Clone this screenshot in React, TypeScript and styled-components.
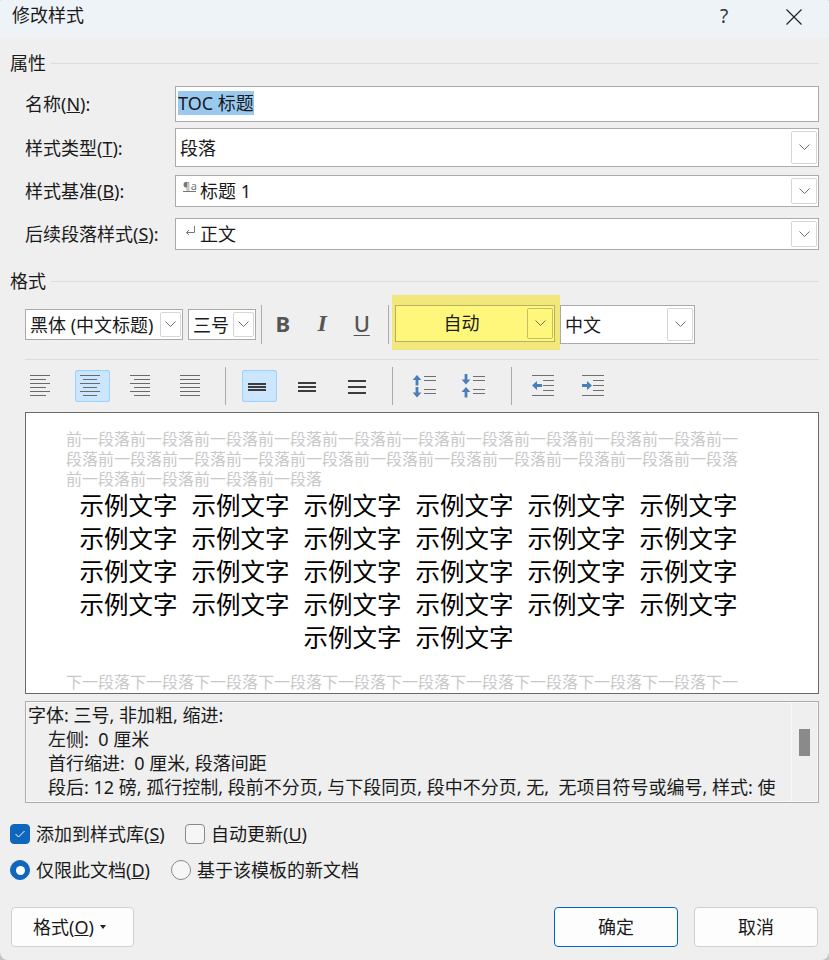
import React from "react";
import styled, { createGlobalStyle } from "styled-components";

const GlobalStyle = createGlobalStyle`
  html, body {
    margin: 0;
    padding: 0;
    background: #c4c4c4;
  }
  * {
    box-sizing: border-box;
  }
`;

const Dialog = styled.div`
  width: 829px;
  height: 960px;
  display: flex;
  flex-direction: column;
  overflow: hidden;
  background: #efefef;
  border-radius: 2px 2px 8px 8px;
  color: #1a1a1a;
  font-family: "Noto Sans", "Noto Sans CJK SC", sans-serif;
  font-size: 18px;
  line-height: 24px;
`;

const TitleBar = styled.div`
  height: 38px;
  flex: none;
  display: flex;
  align-items: center;
  padding: 0 0 5px 12px;
  background: #eef3f8;
  font-size: 18px;
`;

const TitleText = styled.span`
  flex: 1;
  margin-top: -3px;
`;

const HelpButton = styled.span`
  width: 20px;
  margin: -2px 52px 0 0;
  text-align: center;
  font-size: 19px;
  color: #333;
`;

const CloseButton = styled.svg`
  width: 16px;
  height: 16px;
  margin-right: 27px;
`;

const Body = styled.div`
  flex: 1;
  display: flex;
  flex-direction: column;
  padding: 0 10px;
`;

const GroupHead = styled.div<{ $top: number }>`
  display: flex;
  align-items: center;
  height: 24px;
  margin-top: ${({ $top }) => $top}px;
  font-size: 18px;
`;

const GroupLine = styled.div`
  flex: 1;
  height: 1px;
  margin: 0 0 0 5px;
  background: #dcdcdc;
`;

const FormRow = styled.div<{ $top: number; $h: number }>`
  display: flex;
  align-items: center;
  height: ${({ $h }) => $h}px;
  margin-top: ${({ $top }) => $top}px;
  padding-left: 15px;
`;

const FieldLabel = styled.label`
  width: 150px;
  flex: none;
`;

const Field = styled.div`
  flex: 1;
  height: 100%;
  display: flex;
  align-items: center;
  padding: 0 1px 0 4px;
  background: #fff;
  border: 1px solid #aaaab0;
`;

const FieldText = styled.span`
  flex: 1;
  display: flex;
  align-items: center;
  white-space: nowrap;
`;

const Selected = styled.span`
  margin: -3px 0 0 -2px;
  background: #99c9ef;
`;

const StyleMark = styled.span`
  width: 13px;
  margin: -10px 4px 0 3px;
  border-bottom: 1px solid #777;
  color: #777;
  font-size: 11px;
  line-height: 10px;
  letter-spacing: 0.5px;
`;

const ReturnMark = styled.svg`
  width: 12px;
  height: 12px;
  margin: -6px 5px 0 3px;
`;

const ChevronBox = styled.div<{ $w?: number; $bg?: string; $line?: string }>`
  flex: none;
  width: ${({ $w }) => $w ?? 26}px;
  height: calc(100% - 4px);
  display: flex;
  align-items: center;
  justify-content: center;
  background: ${({ $bg }) => $bg ?? "#fff"};
  border: 1px solid ${({ $line }) => $line ?? "#d6d6d6"};
  border-radius: 2px;
`;

const ChevronIcon = styled.svg`
  width: 11px;
  height: 7px;
`;

const Toolbar = styled.div`
  display: flex;
  align-items: center;
  height: 39px;
  margin-top: 12px;
  padding-left: 15px;
`;

const Combo = styled.div<{ $w: number; $h: number; $left?: number }>`
  flex: none;
  display: flex;
  align-items: center;
  width: ${({ $w }) => $w}px;
  height: ${({ $h }) => $h}px;
  margin-left: ${({ $left }) => $left ?? 0}px;
  padding: 0 1px 0 4px;
  background: #fff;
  border: 1px solid #aaaaaa;
  white-space: nowrap;
`;

const ComboText = styled.span`
  flex: 1;
  overflow: hidden;
`;

const ToolSep = styled.div<{ $left: number; $right: number; $h?: number }>`
  flex: none;
  width: 1px;
  height: ${({ $h }) => $h ?? 39}px;
  margin: 0 ${({ $right }) => $right}px 0 ${({ $left }) => $left}px;
  background: #ababab;
`;

const FontButton = styled.span<{ $italic?: boolean; $under?: boolean }>`
  flex: none;
  width: 39.5px;
  padding-bottom: 4px;
  text-align: center;
  color: #555;
  font-family: ${({ $italic }) => ($italic ? '"Liberation Serif"' : '"Noto Sans"')}, serif;
  font-size: ${({ $italic }) => ($italic ? 24 : 22)}px;
  font-weight: ${({ $under }) => ($under ? 500 : "bold")};
  font-style: ${({ $italic }) => ($italic ? "italic" : "normal")};
  text-decoration: ${({ $under }) => ($under ? "underline" : "none")};
  text-decoration-thickness: 1px;
  text-underline-offset: 3px;
`;

const Highlight = styled.div`
  flex: none;
  display: flex;
  align-items: center;
  width: 168px;
  height: 55px;
  margin: -10px 0 -6px;
  padding-left: 3px;
  background: #f2e77b;
`;

const ColorCombo = styled.div`
  display: flex;
  align-items: center;
  width: 160px;
  height: 37px;
  margin-top: 1px;
  padding: 0 1px 0 0;
  background: #fff67c;
  border: 1px solid #b6b163;
`;

const ColorText = styled.span`
  flex: 1;
  text-align: center;
`;

const Divider = styled.div`
  height: 1px;
  margin: 15px 0 0 15px;
  background: #dcdcdc;
`;

const IconBar = styled.div`
  display: flex;
  align-items: center;
  height: 38px;
  margin-top: 7px;
  padding-left: 15px;
`;

const IconGroup = styled.div<{ $gap: number }>`
  display: flex;
  gap: ${({ $gap }) => $gap}px;
`;

const IconButton = styled.div<{ $on?: boolean; $pad?: number }>`
  width: 35px;
  height: 32px;
  display: flex;
  align-items: center;
  padding-left: ${({ $pad }) => $pad ?? 5}px;
  background: ${({ $on }) => ($on ? "#cce6ff" : "transparent")};
  border-radius: 3px;
  box-shadow: ${({ $on }) => ($on ? "inset 0 0 0 1px #99d1ff" : "none")};
`;

const Preview = styled.div`
  height: 282px;
  margin: 7px 0 0 15px;
  padding: 16px 80px 0 40px;
  overflow: hidden;
  background: #fff;
  border: 1px solid #6a6a6a;
`;

const GhostLine = styled.div<{ $top?: number }>`
  margin-top: ${({ $top }) => $top ?? 0}px;
  color: #c8c8c8;
  font-size: 16px;
  line-height: 20px;
  white-space: nowrap;
`;

const SampleRow = styled.div`
  display: flex;
  justify-content: center;
  gap: 14px;
  height: 33px;
  padding-left: 13px;
  color: #000;
  font-size: 24.5px;
  line-height: 34px;
  white-space: nowrap;
`;

const Description = styled.div`
  display: flex;
  height: 102px;
  margin: 7px 0 0 15px;
  border: 1px solid #aaaab0;
  box-shadow: inset 0 0 0 1px #f8f8f8;
`;

const DescText = styled.div`
  flex: 1;
  padding: 1px 0 0 2px;
  overflow: hidden;
  white-space: nowrap;
`;

const DescLine = styled.div<{ $indent?: boolean }>`
  padding-left: ${({ $indent }) => ($indent ? 20 : 0)}px;
  white-space: pre;
`;

const DescScroll = styled.div`
  flex: none;
  width: 27px;
  padding: 27px 0 0 7px;
  border-left: 1px solid #fafafa;
`;

const ScrollThumb = styled.div`
  width: 11px;
  height: 27px;
  background: #8a8a8a;
`;

const OptionRow = styled.div<{ $top: number }>`
  display: flex;
  align-items: center;
  height: 20px;
  margin-top: ${({ $top }) => $top}px;
`;

const OptionLabel = styled.label<{ $w: number }>`
  width: ${({ $w }) => $w}px;
  margin-left: 6px;
  white-space: nowrap;
`;

const CheckMark = styled.span<{ $on?: boolean }>`
  flex: none;
  width: 20px;
  height: 20px;
  display: flex;
  align-items: center;
  justify-content: center;
  background: ${({ $on }) => ($on ? "#0f67bd" : "#f6f6f6")};
  border: 1px solid ${({ $on }) => ($on ? "#0f67bd" : "#8a8a8a")};
  border-radius: 4px;
`;

const RadioMark = styled.span<{ $on?: boolean }>`
  flex: none;
  width: 20px;
  height: 20px;
  display: flex;
  align-items: center;
  justify-content: center;
  background: ${({ $on }) => ($on ? "#0f67bd" : "#f6f6f6")};
  border: 1px solid ${({ $on }) => ($on ? "#0f67bd" : "#8a8a8a")};
  border-radius: 50%;
`;

const RadioDot = styled.span`
  width: 9px;
  height: 9px;
  background: #fff;
  border-radius: 50%;
`;

const Footer = styled.div`
  display: flex;
  align-items: center;
  gap: 16px;
  margin-top: 27px;
  padding: 0 1px;
`;

const Spacer = styled.div`
  flex: 1;
`;

const DialogButton = styled.button<{ $primary?: boolean; $menu?: boolean }>`
  width: ${({ $menu }) => ($menu ? 123 : 124)}px;
  height: 40px;
  display: flex;
  align-items: center;
  justify-content: center;
  gap: 6px;
  padding: 0 ${({ $menu }) => ($menu ? 6 : 0)}px 0 0;
  color: #1a1a1a;
  font: inherit;
  background: #fdfdfd;
  border: 1px solid ${({ $primary }) => ($primary ? "#0067c0" : "#d0d0d0")};
  border-radius: 4px;
`;

const Caret = styled.span`
  width: 0;
  height: 0;
  border-left: 3.5px solid transparent;
  border-right: 3.5px solid transparent;
  border-top: 4px solid #222;
`;

const Chevron = () => (
  <ChevronIcon viewBox="0 0 11 7">
    <polyline points="0.5,0.5 5.5,5.5 10.5,0.5" fill="none" stroke="#6e6e6e" strokeWidth="1" />
  </ChevronIcon>
);

// 6 grey rules, 4px apart; each entry is [x1, x2] for a rule
const RuleIcon = ({ rules }: { rules: number[][] }) => (
  <svg width="20" height="22" viewBox="0 0 20 22">
    {rules.map(([a, b], i) => (
      <rect key={i} x={a} y={i * 4} width={b - a} height="1" fill="#6a6a6a" />
    ))}
  </svg>
);

const BarsIcon = ({ ys }: { ys: number[] }) => (
  <svg width="18" height="18" viewBox="0 0 18 18">
    {ys.map((y) => (
      <rect key={y} x="0" y={y} width="18" height="2" fill="#3c3c3c" />
    ))}
  </svg>
);

const blue = "#4a7ebb";

const UpArrow = ({ y }: { y: number }) => (
  <path d={`M4 ${y}L8.4 ${y + 5}H5.4V${y + 10.5}H2.6V${y + 5}H-.4Z`} fill={blue} />
);
const DownArrow = ({ y }: { y: number }) => (
  <path d={`M4 ${y + 10.5}L8.4 ${y + 5.5}H5.4V${y}H2.6V${y + 5.5}H-.4Z`} fill={blue} />
);

const LineGrow = () => (
  <svg width="23" height="24" viewBox="0 0 23 24" overflow="visible">
    <UpArrow y={1} />
    <DownArrow y={13} />
    {[2, 6, 15, 19].map((y) => (
      <rect key={y} x="11" y={y} width="12" height="1" fill="#707070" />
    ))}
  </svg>
);

const LineShrink = () => (
  <svg width="23" height="24" viewBox="0 0 23 24" overflow="visible">
    <DownArrow y={0} />
    <UpArrow y={13} />
    {[2, 6, 15, 19].map((y) => (
      <rect key={y} x="11" y={y} width="12" height="1" fill="#707070" />
    ))}
  </svg>
);

const IndentIcon = ({ out }: { out?: boolean }) => (
  <svg width="23" height="22" viewBox="0 0 23 22">
    {[0, 20].map((y) => (
      <rect key={y} x="0" y={y} width="22" height="1" fill="#707070" />
    ))}
    {[5, 10, 15].map((y) => (
      <rect key={y} x="11" y={y} width="11" height="1" fill="#707070" />
    ))}
    {out ? (
      <path d="M0 10.5L5 6V9H10V12H5V15Z" fill={blue} />
    ) : (
      <path d="M10 10.5L5 6V9H0V12H5V15Z" fill={blue} />
    )}
  </svg>
);

const rulesLeft = [[0, 20], [0, 16], [0, 20], [0, 16], [0, 20], [0, 16]];
const rulesCenter = [[0, 20], [3, 17], [0, 20], [3, 17], [0, 20], [3, 17]];
const rulesRight = [[0, 20], [4, 20], [0, 20], [4, 20], [0, 20], [4, 20]];
const rulesJustify = [[0, 20], [0, 20], [0, 20], [0, 20], [0, 20], [0, 20]];

const sampleGroups = new Array(6).fill("示例文字");

const App = () => (
  <>
    <GlobalStyle />
    <Dialog>
      <TitleBar>
        <TitleText>修改样式</TitleText>
        <HelpButton>?</HelpButton>
        <CloseButton viewBox="0 0 16 16">
          <path d="M.5.5L15.5 15.5M15.5.5L.5 15.5" stroke="#222" strokeWidth="1.2" fill="none" />
        </CloseButton>
      </TitleBar>
      <Body>
        <GroupHead $top={13}>
          属性
          <GroupLine />
        </GroupHead>
        <FormRow $top={11} $h={36}>
          <FieldLabel>
            名称(<u>N</u>):
          </FieldLabel>
          <Field>
            <FieldText>
              <Selected>TOC 标题</Selected>
            </FieldText>
          </Field>
        </FormRow>
        <FormRow $top={6} $h={39}>
          <FieldLabel>
            样式类型(<u>T</u>):
          </FieldLabel>
          <Field>
            <FieldText>段落</FieldText>
            <ChevronBox>
              <Chevron />
            </ChevronBox>
          </Field>
        </FormRow>
        <FormRow $top={8} $h={32}>
          <FieldLabel>
            样式基准(<u>B</u>):
          </FieldLabel>
          <Field>
            <FieldText>
              <StyleMark>¶a</StyleMark>标题 1
            </FieldText>
            <ChevronBox>
              <Chevron />
            </ChevronBox>
          </Field>
        </FormRow>
        <FormRow $top={11} $h={32}>
          <FieldLabel>
            后续段落样式(<u>S</u>):
          </FieldLabel>
          <Field>
            <FieldText>
              <ReturnMark viewBox="0 0 12 12">
                <path d="M11.5 1V7.5H3.5M6 5L3.5 7.5L6 10" stroke="#777" fill="none" />
              </ReturnMark>
              正文
            </FieldText>
            <ChevronBox>
              <Chevron />
            </ChevronBox>
          </Field>
        </FormRow>

        <GroupHead $top={19}>
          格式
          <GroupLine />
        </GroupHead>
        <Toolbar>
          <Combo $w={158} $h={31}>
            <ComboText>黑体 (中文标题)</ComboText>
            <ChevronBox $w={21}>
              <Chevron />
            </ChevronBox>
          </Combo>
          <Combo $w={68} $h={31} $left={5}>
            <ComboText>三号</ComboText>
            <ChevronBox $w={21}>
              <Chevron />
            </ChevronBox>
          </Combo>
          <ToolSep $left={5} $right={1} />
          <FontButton>B</FontButton>
          <FontButton $italic>I</FontButton>
          <FontButton $under>U</FontButton>
          <ToolSep $left={6.5} $right={3} />
          <Highlight>
            <ColorCombo>
              <ColorText>自动</ColorText>
              <ChevronBox $bg="#fff67c" $line="#c4bf68">
                <Chevron />
              </ChevronBox>
            </ColorCombo>
          </Highlight>
          <Combo $w={135} $h={39}>
            <ComboText>中文</ComboText>
            <ChevronBox>
              <Chevron />
            </ChevronBox>
          </Combo>
        </Toolbar>
        <Divider />
        <IconBar>
          <IconGroup $gap={15}>
            <IconButton>
              <RuleIcon rules={rulesLeft} />
            </IconButton>
            <IconButton $on>
              <RuleIcon rules={rulesCenter} />
            </IconButton>
            <IconButton>
              <RuleIcon rules={rulesRight} />
            </IconButton>
            <IconButton>
              <RuleIcon rules={rulesJustify} />
            </IconButton>
          </IconGroup>
          <ToolSep $left={15} $right={16} $h={38} />
          <IconGroup $gap={15}>
            <IconButton $on $pad={6}>
              <BarsIcon ys={[6, 9, 12]} />
            </IconButton>
            <IconButton $pad={6}>
              <BarsIcon ys={[5, 9, 13]} />
            </IconButton>
            <IconButton $pad={6}>
              <BarsIcon ys={[3, 9, 15]} />
            </IconButton>
          </IconGroup>
          <ToolSep $left={15} $right={15} $h={38} />
          <IconGroup $gap={14}>
            <IconButton>
              <LineGrow />
            </IconButton>
            <IconButton>
              <LineShrink />
            </IconButton>
          </IconGroup>
          <ToolSep $left={19} $right={15} $h={38} />
          <IconGroup $gap={15}>
            <IconButton>
              <IndentIcon out />
            </IconButton>
            <IconButton>
              <IndentIcon />
            </IconButton>
          </IconGroup>
        </IconBar>

        <Preview>
          <GhostLine>{"前一段落".repeat(10)}前一</GhostLine>
          <GhostLine>{"段落前一".repeat(10)}段落</GhostLine>
          <GhostLine>{"前一段落".repeat(4)}</GhostLine>
          {[6, 6, 6, 6, 2].map((count, i) => (
            <SampleRow key={i}>
              {sampleGroups.slice(0, count).map((text, j) => (
                <span key={j}>{text}</span>
              ))}
            </SampleRow>
          ))}
          <GhostLine $top={18}>{"下一段落".repeat(10)}下一</GhostLine>
        </Preview>

        <Description>
          <DescText>
            <DescLine>字体: 三号, 非加粗, 缩进:</DescLine>
            <DescLine $indent>左侧:  0 厘米</DescLine>
            <DescLine $indent>首行缩进:  0 厘米, 段落间距</DescLine>
            <DescLine $indent>段后: 12 磅, 孤行控制, 段前不分页, 与下段同页, 段中不分页, 无,  无项目符号或编号, 样式: 使</DescLine>
          </DescText>
          <DescScroll>
            <ScrollThumb />
          </DescScroll>
        </Description>

        <OptionRow $top={21}>
          <CheckMark $on>
            <svg width="12" height="10" viewBox="0 0 12 10">
              <path d="M1.5 5L4.5 8L10.5 2" stroke="#fff" fill="none" />
            </svg>
          </CheckMark>
          <OptionLabel $w={149}>
            添加到样式库(<u>S</u>)
          </OptionLabel>
          <CheckMark />
          <OptionLabel $w={120}>
            自动更新(<u>U</u>)
          </OptionLabel>
        </OptionRow>
        <OptionRow $top={16}>
          <RadioMark $on>
            <RadioDot />
          </RadioMark>
          <OptionLabel $w={135}>
            仅限此文档(<u>D</u>)
          </OptionLabel>
          <RadioMark />
          <OptionLabel $w={170}>基于该模板的新文档</OptionLabel>
        </OptionRow>

        <Footer>
          <DialogButton $menu>
            <span>
              格式(<u>O</u>)
            </span>
            <Caret />
          </DialogButton>
          <Spacer />
          <DialogButton $primary>确定</DialogButton>
          <DialogButton>取消</DialogButton>
        </Footer>
      </Body>
    </Dialog>
  </>
);

export default App;
